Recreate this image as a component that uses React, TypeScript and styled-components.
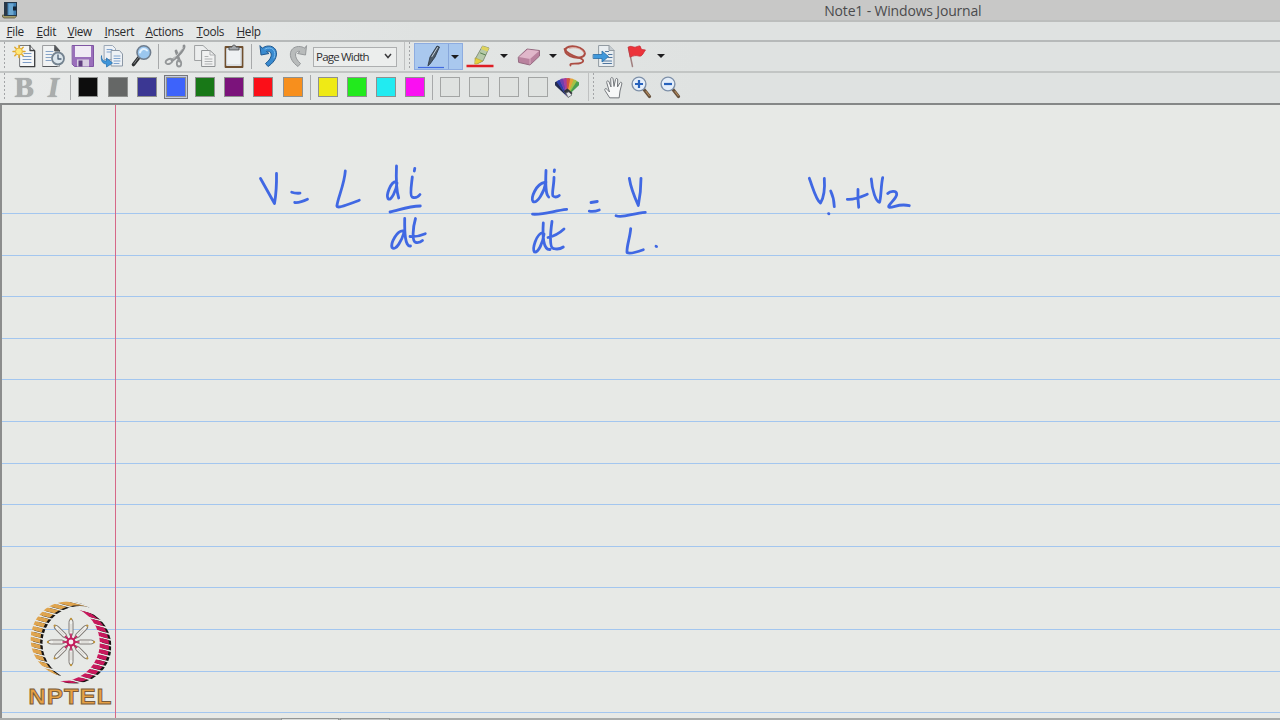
import React from "react";
import styled, { createGlobalStyle } from "styled-components";

const GlobalStyle = createGlobalStyle`
  * { box-sizing: border-box; }
  body { margin: 0; overflow: hidden; background: #e7e9e6; }
`;

const uiFont = `"Open Sans", "Noto Sans", sans-serif`;

const Window = styled.div`
  width: 1280px;
  height: 720px;
  display: flex;
  flex-direction: column;
  overflow: hidden;
  font-family: ${uiFont};
`;

const TitleBar = styled.header`
  height: 22px;
  flex: none;
  display: flex;
  align-items: center;
  justify-content: space-between;
  padding: 0 298.500px 0 2px;
  background: #c8c8c7;
  border-bottom: 2px solid #bcbebd;
  color: #4b4b4d;
`;

const Title = styled.span`
  font-size: 14px;
  line-height: 20px;
  letter-spacing: -0.17px;
  padding-top: 2px;
  white-space: nowrap;
`;

const MenuBar = styled.nav`
  height: 20px;
  flex: none;
  display: flex;
  padding-left: 6.5px;
  background: linear-gradient(90deg, #e8eaea 0, #dfe2e1 420px);
  border-bottom: 2px solid #b6b9b9;
`;

const MenuItem = styled.span<{ $w: number }>`
  width: ${(p) => p.$w}px;
  font-size: 11.8px;
  line-height: 18px;
  letter-spacing: -0.35px;
  color: #2a2a2c;
  white-space: nowrap;
`;

const Toolbar = styled.div<{ $last?: boolean }>`
  height: ${(p) => (p.$last ? 32 : 31)}px;
  flex: none;
  display: flex;
  align-items: center;
  padding-bottom: ${(p) => (p.$last ? 2 : 1)}px;
  background: linear-gradient(90deg, #e9ebea 0, #dfe2e1 700px);
  border-bottom: 2px solid ${(p) => (p.$last ? "#858787" : "#c2c5c4")};
`;

const Grip = styled.div<{ $w?: number }>`
  width: ${(p) => p.$w ?? 9.6}px;
  height: 28px;
  padding-left: 4px;
  flex: none;
  &::before {
    content: "";
    display: block;
    width: 1px;
    height: 100%;
    background: repeating-linear-gradient(180deg, #a3a5a7 0 2px, transparent 2px 4px);
  }
`;

const BandEdge = styled.div<{ $gap: number }>`
  width: 1px;
  height: 28px;
  flex: none;
  margin-left: ${(p) => p.$gap}px;
  background: #bfc1c1;
`;

const Separator = styled.div`
  width: 1px;
  height: 25px;
  flex: none;
  margin: 0 2.4px;
  background: #a7a9aa;
`;

const Slot = styled.div<{ $w?: number }>`
  width: ${(p) => p.$w ?? 29.2}px;
  height: 28px;
  flex: none;
  display: flex;
  align-items: center;
  justify-content: center;
`;

const ActiveTool = styled.div`
  width: 49px;
  height: 27px;
  margin-top: 1px;
  flex: none;
  display: flex;
  border: 1px solid #8dace0;
  background: #a9c8ee;
`;

const ActiveMain = styled.div`
  width: 34px;
  display: flex;
  align-items: center;
  justify-content: center;
  border-right: 1px solid #86a6db;
`;

const ActiveDrop = styled.div`
  flex: 1;
  display: flex;
  align-items: center;
  justify-content: center;
`;

const Caret = styled.i`
  border: 4px solid transparent;
  border-top: 4px solid #1c1c1e;
  border-bottom: 0;
`;

const ZoomSelect = styled.div`
  width: 84px;
  height: 20px;
  margin-top: 1px;
  flex: none;
  display: flex;
  align-items: center;
  justify-content: space-between;
  padding: 0 4px 1px 2px;
  background: #eceeed;
  border: 1px solid #adafb0;
  font-size: 11.5px;
  letter-spacing: -0.8px;
  color: #303032;
  white-space: nowrap;
`;

const Swatch = styled.div<{ $color?: string; $active?: boolean }>`
  width: 20px;
  height: 20px;
  background: ${(p) => p.$color ?? "#dfe2e0"};
  border: 1px solid ${(p) => (p.$color ? "#8f918f" : "#a3a5a4")};
  outline: ${(p) => (p.$active ? "1px solid #75777c" : "none")};
  outline-offset: 1px;
  box-shadow: ${(p) => (p.$active ? "0 0 0 1px #c5cbe0" : "none")};
`;

const FormatLetter = styled.span<{ $italic?: boolean }>`
  font-family: "Liberation Serif", serif;
  font-size: 29px;
  font-weight: 700;
  line-height: 28px;
  font-style: ${(p) => (p.$italic ? "italic" : "normal")};
  color: #aaadad;
  text-shadow: 0 0 1px #8d9090;
`;

const Paper = styled.main`
  position: relative;
  flex: 1;
  padding-top: 67.4px;
  background: #e7e9e6;
  border-left: 2px solid #8c8d8d;
  overflow: hidden;
`;

const RuledLine = styled.div`
  height: 41.6px;
  border-bottom: 1px solid #a3c6ef;
`;

const MarginLine = styled.div`
  position: absolute;
  top: 0;
  bottom: 0;
  left: 113px;
  width: 1px;
  background: #d66888;
`;

const Ink = styled.svg`
  position: absolute;
  left: -2px;
  top: 0;
`;

const Watermark = styled.svg`
  position: absolute;
  left: 23px;
  bottom: 9px;
`;

const StatusStrip = styled.footer`
  height: 2px;
  flex: none;
  padding-left: 281px;
  display: flex;
  gap: 1px;
  background: #a9abaa;
`;

const StatusTab = styled.div<{ $w: number; $bg: string }>`
  width: ${(p) => p.$w}px;
  background: ${(p) => p.$bg};
  border: 1px solid #939594;
  border-bottom: 0;
`;

const Icon = ({ children, w = 24 }: { children: React.ReactNode; w?: number }) => (
  <svg width={w} height={24} viewBox={`0 0 ${w} 24`} fill="none" strokeLinecap="round" strokeLinejoin="round">
    {children}
  </svg>
);

const AppIcon = () => (
  <svg width="17" height="18" viewBox="0 0 17 18">
    <path d="M.5 14h12l2 1.500-2 1.500H2l-1.500-1z" fill="#a49c68" stroke="#5f5b45" strokeWidth=".8" />
    <rect x="2.500" y="1.500" width="12" height="13" fill="#3e7db0" stroke="#25394c" />
    <rect x="2.500" y="1.500" width="3" height="12.500" fill="#2a3846" />
    <path d="M6.500 2.500h5v11.500h-5z" fill="#6aa6d0" />
    <rect x="11" y="5.500" width="3.500" height="4" fill="#152434" />
  </svg>
);

const NewNoteIcon = () => (
  <Icon>
    <path d="M8 1.500h10l4.500 5V22.500H8z" fill="#f4f6f7" stroke="#77797c" />
    <path d="M18 1.500v5h4.500M22.700 7v15.700H8.500" stroke="#3f4143" strokeWidth="1.300" />
    <path d="M12 9.500h7M11 12.500h8M11 15.500h8M11 18.500h8" stroke="#7c9cc6" />
    <path d="M7 1.500v12M1 7.500h12M2.800 3.300l8.400 8.400M11.200 3.300l-8.400 8.400" stroke="#e0a92c" strokeWidth="1.500" />
    <circle cx="7" cy="7.500" r="3.500" fill="#ffe774" stroke="#e8b640" />
  </Icon>
);

const ScheduleIcon = () => (
  <Icon>
    <path d="M2 1.500h12l4.500 5v16H2z" fill="#f1f3f3" stroke="#9b9d9f" />
    <path d="M14 1.500l5 5.500h-5zM2 22.500h14" fill="#55585b" stroke="#55585b" />
    <path d="M5 7.500h7M5 10.500h6M5 13.500h5M5 16.500h5" stroke="#86a3c6" />
    <circle cx="17" cy="14.500" r="6" fill="#dce6ec" stroke="#748390" strokeWidth="1.800" />
    <path d="M17 11v4h3" stroke="#4e6275" strokeWidth="1.300" />
  </Icon>
);

const SaveIcon = () => (
  <Icon>
    <path d="M1.500 1.500h21v21h-19l-2-2z" fill="#9a6fbb" stroke="#7f55a3" />
    <rect x="4" y="2" width="16" height="11" fill="#f0eaf5" />
    <rect x="6" y="15.500" width="12" height="7" fill="#d9cfe2" />
    <rect x="7.500" y="16.500" width="4" height="6" fill="#614080" />
  </Icon>
);

const ImportIcon = () => (
  <Icon>
    <path d="M4.500 1.500h8l3 3v11h-11z" fill="#edf1f5" stroke="#9ba7b5" />
    <path d="M11.500 6.500h8l3 3.500v12h-11z" fill="#edf1f5" stroke="#8b97a5" />
    <path d="M7 5.500h5M7 8h4M14 12h6M14 14.500h6M14 17h6M14 19.500h5" stroke="#7fa3cf" />
    <path d="M1.500 12c0 4 2 5 5 5v-3l6 5-6 4v-3c-3.500 0-6-3-5-8z" fill="#3f95d9" stroke="#2873b2" strokeWidth=".8" />
  </Icon>
);

const FindIcon = () => (
  <Icon>
    <path d="M9.500 14L4.500 20.500" stroke="#2f3133" strokeWidth="3.600" />
    <path d="M9.500 13.500L5 19.500" stroke="#85888a" strokeWidth="1" />
    <circle cx="14.800" cy="8.500" r="6.800" fill="#9bc7ef" stroke="#6f7d8d" strokeWidth="1.600" />
    <path d="M11 8.500c1-4 5-4.500 7-2" stroke="#e3f2ff" strokeWidth="2" />
  </Icon>
);

const CutIcon = () => (
  <Icon>
    <path d="M20 2c1 2-5 10-12 14.500M12 7l3.500 10" stroke="#8d9092" strokeWidth="2.800" />
    <path d="M19 4L9.500 15" stroke="#cdcfcf" />
    <ellipse cx="5" cy="17.500" rx="3.500" ry="2.300" transform="rotate(-25 5 17.500)" stroke="#949799" strokeWidth="1.800" />
    <ellipse cx="15" cy="19.500" rx="2.200" ry="3" stroke="#949799" strokeWidth="1.800" />
  </Icon>
);

const CopyIcon = () => (
  <Icon>
    <path d="M2 1.500h8l4.500 4v11H2z" fill="#eceeee" stroke="#9fa2a3" />
    <path d="M9 6.500h8l5 4.500v11.500H9z" fill="#f0f1f1" stroke="#8f9294" />
    <path d="M17 6.500v4.500h5M12 12.500h3M12 15h7M12 17.500h7M12 20h7" stroke="#aeb1b2" />
  </Icon>
);

const PasteIcon = () => (
  <Icon>
    <rect x="3.500" y="3" width="17" height="20" fill="#eef1f3" stroke="#70502f" strokeWidth="1.800" />
    <rect x="5" y="5" width="14" height="16" stroke="#cad0d5" />
    <path d="M7 5.500V3h3c0-2.500 4-2.500 4 0h3v2.500z" fill="#a3a7aa" stroke="#515558" />
  </Icon>
);

const UndoIcon = () => (
  <Icon>
    <path d="M3 2l1 9 8-1.500-2.500-2C15 6 17 13 8.500 19.500L11 22.500C23 15 21.500 2 11.500 2 9 2 7 3 5.500 4z" fill="#398bd0" stroke="#1f588f" />
    <path d="M8 5c7-3.500 12 2 9 9" stroke="#7dbdef" />
  </Icon>
);

const RedoIcon = () => (
  <Icon>
    <path d="M20.500 2l-1 9-8-1.500 2.500-2C9 6 7 13 14.500 19.500L12 22.500C1 15 2.500 3 12.500 2.500c2.500 0 4.500.5 6 1.500z" fill="#b8bbbb" stroke="#95989a" />
  </Icon>
);

const PenIcon = () => (
  <Icon w={30}>
    <path d="M12 20.500l2-8.500L21 1l2.500 1-4.500 10-5 7z" fill="#4c5a68" stroke="#27323d" strokeWidth=".8" />
    <path d="M16 11.500l5.500-9" stroke="#c4d0dc" />
    <path d="M2 22.500h26" stroke="#416be1" strokeWidth="1.200" strokeLinecap="butt" />
  </Icon>
);

const HighlighterIcon = () => (
  <Icon w={28}>
    <path d="M9.500 14.500l7-12.500 6.500 2-6 13-5.500 2.500z" fill="#b6c9a8" stroke="#87927c" />
    <path d="M16.500 2l6.500 2-1.500 3.500-6.500-2.500z" fill="#dfd35c" />
    <path d="M14.500 9l5 2" stroke="#56804f" />
    <path d="M9.500 14l7 3-5.500 3h-2z" fill="#e5d03c" stroke="#b3a32f" strokeWidth=".6" />
    <path d="M.5 22h27" stroke="#de1e25" strokeWidth="2.500" strokeLinecap="butt" />
  </Icon>
);

const EraserIcon = () => (
  <Icon>
    <path d="M1.500 13L10 5l12.500 1.500V12L13 21l-11-2.500z" fill="#b9829e" stroke="#946a80" />
    <path d="M2 13L10.500 5.500 22 7l-9 8z" fill="#e0b7ca" />
    <path d="M13 15v5" stroke="#d9adc1" />
  </Icon>
);

const LassoIcon = () => (
  <Icon>
    <ellipse cx="13" cy="8" rx="10" ry="5.500" transform="rotate(12 13 8)" stroke="#ac4d43" strokeWidth="2" />
    <path d="M2.500 5c3 5 8 7 15 9 6 2 4 5-1 5.500s-9-.5-8 2" stroke="#ac4d43" strokeWidth="1.800" />
    <path d="M7.500 4.500c5-2 12 0 14.500 4" stroke="#dc958a" strokeWidth=".7" />
  </Icon>
);

const InsertSpaceIcon = () => (
  <Icon>
    <path d="M7 1.500h10l5 5V22.500H7z" fill="#e9eef1" stroke="#929ba2" />
    <path d="M17 1.500v5h5" fill="#c5ccd0" stroke="#929ba2" />
    <path d="M13.500 7.500h3M16.500 10.500h3.500M16.500 13.500h3.500M11 17h8.500M11 19.500h8.500" stroke="#50769f" strokeWidth="1.200" />
    <path d="M1.500 10.500h8.500V7l6.500 5.500-6.500 5.500V14.500H1.500z" fill="#4099dc" stroke="#286ca5" strokeWidth=".8" />
  </Icon>
);

const FlagIcon = () => (
  <Icon>
    <path d="M4.500 3.500l4 19" stroke="#a18180" strokeWidth="1.500" />
    <path d="M4.500 3c3-2 5 1 7.500 0s3-1 4-1l1.500 3.500 4 .5c-2 2-3 7-6.500 6-3-.8-5.500-.5-8.500 1z" fill="#ec333a" stroke="#c92831" strokeWidth=".8" />
  </Icon>
);

const PaletteIcon = () => (
  <Icon>
    {["#232a50", "#2c3eaa", "#6f3fae", "#a83d9b", "#d4533f", "#e6a339", "#a5c246", "#4a9e50"].map((c, i) => (
      <path key={c} d="M12 21.500L9.800 3.500Q12 2.300 14.200 3.500z" fill={c} transform={`rotate(${-40 + i * 11.400} 12 21.500)`} />
    ))}
    <path d="M8.500 16l4-2.500 5 4.500-4 4.500z" fill="#33363b" />
    <path d="M11 18l2 4.500 4-2.500-3-3z" fill="#dfe2e6" stroke="#595d63" strokeWidth=".7" />
  </Icon>
);

const HandIcon = () => (
  <Icon>
    <path
      d="M9.500 22.500L5 15.500c-1-2 1-2.500 2.200-1L9.500 17 6.700 7.500c-.3-2 1.800-2.200 2.400-.5L11 12 10.700 4c0-2 2.200-2 2.400 0L14 11.500l1.500-7c.5-1.800 2.500-1.200 2.200.5L17.500 12l2.300-4c.8-1.500 2.500-.6 2 1L20 16l-.8 6.500z"
      fill="#f7f8f8"
      stroke="#75797d"
    />
  </Icon>
);

const ZoomIcon = ({ plus }: { plus?: boolean }) => (
  <Icon>
    <path d="M15 14.500l5.500 7" stroke="#66513d" strokeWidth="3.200" />
    <path d="M17 16.500l3.200 4" stroke="#b48a5b" strokeWidth="1.200" />
    <circle cx="10" cy="9" r="6.900" fill="#e4eefa" stroke="#7e90a8" strokeWidth="1.400" />
    <path d={plus ? "M6 9h8M10 5v8" : "M6 9h8"} stroke="#2762bd" strokeWidth="2.200" strokeLinecap="butt" />
  </Icon>
);

const inkStrokes = [
  // V = L
  "M260.500 178.500Q267 190 274.500 203.500Q276.800 190 276.500 173.500",
  "M291.700 192.300Q295 193.500 300 193.200M294.700 202.500Q300 203 307.500 199.300",
  "M345.300 171C344.500 184 337.500 199 337 205.500C336.500 209 344 206 359.300 200.300",
  // di over dt
  "M396.500 166C396 178 396.500 191 398.700 198M396 181.500C390.500 182 386 195 388 198.500C391 202 396.500 190 397 183",
  "M414.800 168.300L414.300 171M412.300 177C411.500 185 409.500 195 412 197C415 198.500 418 197 420 194.500",
  "M390 212C398 210.500 408 206 420.300 206",
  "M404.700 218.500C404.500 232 405 247 410.500 246M403.500 231C397 230 390.500 243 392 247.500C396 251.500 402 240 404.500 231",
  "M415.500 218.500C413 227 411.500 242 416 242.500Q420 243 422.500 240.500M410 236.500Q418 237 425.300 233.700",
  // di over dt, second fraction
  "M546 170.500C545.500 182 545 194 548.700 197M544.500 182.500C536 184 530.500 198 533 201.500C537 204 544 193 546 182",
  "M554.500 169.800L554.200 171.500M554 177.500C554 185 551.500 194 553 196C555 197.500 557.500 197 559.300 195.500",
  "M532.500 214.200C545 215 554 210.500 566.700 209.300",
  "M543.300 223C542.500 235 543 250 550 249.500M543 232.500C536 234 532 249 534.500 252C538 253 543 243 544 234",
  "M552 221.500C550.500 232 549 248 553.500 248.500Q559 250 563.300 247M548 237.500Q557 235.500 564 229",
  // = V over L
  "M591 202.500L597.300 201.500M589.300 211.200Q594 212 599.300 210",
  "M629.300 178.300C631 189 634 196 638.300 205.500C640 197 641 188 641 178.300",
  "M616 215.700C623 218.500 633 213 645.300 212.300",
  "M630.700 228.700C630 238 626.500 246 627 252.500C630 254.500 637 252 643.300 249.700",
  // V1 + V2
  "M809.300 178.300C813 188 816 200 820.500 203C823.500 198 825 188 824.300 178.300",
  "M830.700 191Q834 198 834.300 206.700",
  "M847.300 199.300C855 200 861 197 867.300 194.300M858 189.300Q857.500 198 858.700 207.300",
  "M871.300 179C872 190 876 202 879.500 202.300C881 200 881 184 882.700 177.700",
  "M887.700 193.500C890 191 896.500 190 896.700 194C897 199 886 206 889.300 207.300C894 207.800 899 203 909.300 205.700",
  // loose dots
  "M656 246.300L656.600 246.500",
  "M828.500 213.600L828.900 213.800",
];

const blades = Array.from({ length: 24 }, (_, i) => `M-4 ${(-26 + i * 5.6).toFixed(1)}l100 26`).join("");

const Logo = () => (
  <Watermark width="92" height="114" viewBox="0 0 92 114" fill="none">
    <defs>
      <clipPath id="leftCrescent">
        <path d="M62.300 11.700A37.500 37.500 0 1 0 34 80.300A37.400 37.400 0 0 1 62.300 11.700z" />
      </clipPath>
      <clipPath id="rightCrescent">
        <path d="M52.300 13.700A37.300 37.300 0 1 1 35 86A37.800 37.800 0 0 0 52.300 13.700z" />
      </clipPath>
    </defs>
    {[
      { clip: "leftCrescent", color: "#dfa44e" },
      { clip: "rightCrescent", color: "#c8185c" },
    ].map(({ clip, color }) => (
      <g key={clip} strokeWidth="3.900">
        <g transform="translate(2.400 .7)">
          <path d={blades} stroke="#191615" clipPath={`url(#${clip})`} />
        </g>
        <path d={blades} stroke={color} clipPath={`url(#${clip})`} />
      </g>
    ))}
    {Array.from({ length: 8 }, (_, i) => (
      <g key={i} transform={`rotate(${i * 45} 46 47)`}>
        <path d="M46 42.500L44 38V27.500C44 25.500 45 24 46 23.500C47 24 48 25.500 48 27.500V38z" fill="#eeefec" stroke="#807b76" strokeWidth="1" />
        <path d="M46 37V29" stroke="#c9c5bf" strokeWidth=".7" />
        <circle cx="46" cy="24" r="1.200" fill="#bd9440" />
        <path d="M46 43V38.500" stroke="#c51c5d" strokeWidth="1.600" />
      </g>
    ))}
    <circle cx="46" cy="47" r="3.500" fill="#f5eff1" stroke="#c51c5d" strokeWidth="2.200" />
    <text
      x="3.500"
      y="108.700"
      textLength="84"
      lengthAdjust="spacingAndGlyphs"
      fontFamily="Liberation Sans, sans-serif"
      fontWeight="700"
      fontSize="22"
      letterSpacing="1"
      fill="#e6a044"
      stroke="#7a5c38"
      strokeWidth=".9"
    >
      NPTEL
    </text>
  </Watermark>
);

const menus: [string, number][] = [
  ["File", 30],
  ["Edit", 31],
  ["View", 37],
  ["Insert", 41],
  ["Actions", 51],
  ["Tools", 40],
  ["Help", 40],
];

const darkInks = ["#0d0d0d", "#656766", "#3b3793", "#3d63fb", "#187817", "#7b137b", "#fb0f18", "#f78f1d"];
const brightInks = ["#efea15", "#22ea1d", "#21ebf1", "#fa0ff2"];

export default function App() {
  return (
    <Window>
      <GlobalStyle />
      <TitleBar>
        <AppIcon />
        <Title>Note1 - Windows Journal</Title>
      </TitleBar>
      <MenuBar>
        {menus.map(([name, w]) => (
          <MenuItem key={name} $w={w}>
            <u>{name[0]}</u>
            {name.slice(1)}
          </MenuItem>
        ))}
      </MenuBar>
      <Toolbar>
        <Grip />
        <Slot><NewNoteIcon /></Slot>
        <Slot><ScheduleIcon /></Slot>
        <Slot><SaveIcon /></Slot>
        <Slot><ImportIcon /></Slot>
        <Slot><FindIcon /></Slot>
        <Separator />
        <Slot><CutIcon /></Slot>
        <Slot><CopyIcon /></Slot>
        <Slot><PasteIcon /></Slot>
        <Separator />
        <Slot><UndoIcon /></Slot>
        <Slot><RedoIcon /></Slot>
        <ZoomSelect>
          Page Width
          <svg width="8" height="6" viewBox="0 0 8 6" fill="none" stroke="#3b3b3d" strokeWidth="1.500">
            <path d="M1 1l3 3.500L7 1" />
          </svg>
        </ZoomSelect>
        <BandEdge $gap={7} />
        <Grip $w={8.800} />
        <ActiveTool>
          <ActiveMain><PenIcon /></ActiveMain>
          <ActiveDrop><Caret /></ActiveDrop>
        </ActiveTool>
        <Slot $w={34}><HighlighterIcon /></Slot>
        <Slot $w={15}><Caret /></Slot>
        <Slot $w={34}><EraserIcon /></Slot>
        <Slot $w={14}><Caret /></Slot>
        <Slot><LassoIcon /></Slot>
        <Slot><InsertSpaceIcon /></Slot>
        <Slot $w={35}><FlagIcon /></Slot>
        <Slot $w={15}><Caret /></Slot>
      </Toolbar>
      <Toolbar $last>
        <Grip />
        <Slot><FormatLetter>B</FormatLetter></Slot>
        <Slot><FormatLetter $italic>I</FormatLetter></Slot>
        <Separator />
        {darkInks.map((c, i) => (
          <Slot key={c}><Swatch $color={c} $active={i === 3} /></Slot>
        ))}
        <Separator />
        {brightInks.map((c) => (
          <Slot key={c}><Swatch $color={c} /></Slot>
        ))}
        <Separator />
        {[0, 1, 2, 3].map((n) => (
          <Slot key={n}><Swatch /></Slot>
        ))}
        <Slot><PaletteIcon /></Slot>
        <BandEdge $gap={6} />
        <Grip $w={9} />
        <Slot><HandIcon /></Slot>
        <Slot><ZoomIcon plus /></Slot>
        <Slot><ZoomIcon /></Slot>
      </Toolbar>
      <Paper>
        {Array.from({ length: 13 }, (_, i) => (
          <RuledLine key={i} />
        ))}
        <MarginLine />
        <Ink
          width="1280"
          height="615"
          viewBox="0 105 1280 615"
          fill="none"
          stroke="#4068e3"
          strokeWidth="2.800"
          strokeLinecap="round"
          strokeLinejoin="round"
        >
          {inkStrokes.map((d) => (
            <path key={d} d={d} />
          ))}
        </Ink>
        <Logo />
      </Paper>
      <StatusStrip>
        <StatusTab $w={58} $bg="#d9dbd9" />
        <StatusTab $w={50} $bg="#c3c5c4" />
      </StatusStrip>
    </Window>
  );
}
